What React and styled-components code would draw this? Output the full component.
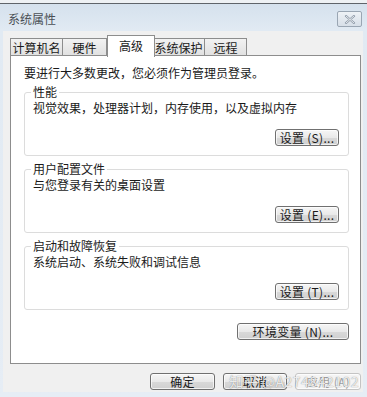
import React from "react";
import styled, { createGlobalStyle } from "styled-components";

const GlobalStyle = createGlobalStyle`
  html, body {
    margin: 0;
    padding: 0;
    background: #dfe8f1;
  }
  body {
    font-family: "Noto Sans CJK SC", "Noto Sans", sans-serif;
    font-size: 12px;
    color: #1a1a1a;
  }
`;

const tabs = [
  { label: "计算机名", width: 53 },
  { label: "硬件", width: 44 },
  { label: "高级", width: 48 },
  { label: "系统保护", width: 52 },
  { label: "远程", width: 42 },
];

const groups = [
  { title: "性能", desc: "视觉效果，处理器计划，内存使用，以及虚拟内存", key: "S" },
  { title: "用户配置文件", desc: "与您登录有关的桌面设置", key: "E" },
  { title: "启动和故障恢复", desc: "系统启动、系统失败和调试信息", key: "T" },
];

const App = () => {
  return (
    <>
      <GlobalStyle />
      <Window>
        <TitleBar>
          <Title>系统属性</Title>
          <CloseButton>
            <svg width="12" height="9" viewBox="0 0 12 9">
              <path d="M2 1 L10 8 M10 1 L2 8" stroke="#8a97a6" strokeWidth="2.2" strokeLinecap="round" />
              <path d="M2 1 L10 8 M10 1 L2 8" stroke="#fff" strokeWidth="0.8" strokeLinecap="round" />
            </svg>
          </CloseButton>
        </TitleBar>
        <Body>
          <TabRow>
            {tabs.map((t) => (
              <Tab key={t.label} width={t.width} active={t.label === "高级"}>
                {t.label}
              </Tab>
            ))}
          </TabRow>
          <Panel>
            <Notice>要进行大多数更改，您必须作为管理员登录。</Notice>
            {groups.map((g) => (
              <Group key={g.title}>
                <Legend>{g.title}</Legend>
                <Desc>{g.desc}</Desc>
                <GroupFoot>
                  <Button width={64}>设置 ({g.key})...</Button>
                </GroupFoot>
              </Group>
            ))}
            <PanelFoot>
              <Button width={112}>环境变量 (N)...</Button>
            </PanelFoot>
          </Panel>
          <DialogFoot>
            <Button width={65}>确定</Button>
            <Button width={64}>取消</Button>
            <Button width={66} disabled>
              应用 (A)
            </Button>
            <Watermark>知乎 @A274842102</Watermark>
          </DialogFoot>
        </Body>
      </Window>
    </>
  );
};

export default App;

const Window = styled.div`
  width: 367px;
  height: 397px;
  box-sizing: border-box;
  padding-top: 3px;
  background: linear-gradient(#eef1f4 3px, #d5e1ed 4px, #e1eaf3 30px, #e6edf5);
  display: flex;
  flex-direction: column;
  overflow: hidden;
`;

const TitleBar = styled.div`
  height: 27px;
  flex-shrink: 0;
  border-top: 1px solid #5f646a;
  display: flex;
  align-items: center;
  justify-content: space-between;
  padding: 0 5px 0 8px;
`;

const Title = styled.div`
  font-size: 12px;
  color: #4a4f55;
  padding-top: 2px;
`;

const CloseButton = styled.div`
  width: 23px;
  height: 14px;
  margin-top: 3px;
  border: 1px solid #9aa6b3;
  border-radius: 2px;
  background: linear-gradient(#eef2f6, #d7dfe8);
  display: flex;
  align-items: center;
  justify-content: center;
`;

const Body = styled.div`
  flex: 1;
  margin: 0 4px 5px 3px;
  background: #f0f0f0;
  padding: 3px 2px 0 7px;
  display: flex;
  flex-direction: column;
  position: relative;
`;

const TabRow = styled.div`
  display: flex;
  align-items: flex-end;
  height: 22px;
  position: relative;
  z-index: 1;
`;

const Tab = styled.div`
  width: ${(p) => p.width}px;
  box-sizing: border-box;
  text-align: center;
  height: ${(p) => (p.active ? "22px" : "18px")};
  line-height: ${(p) => (p.active ? "19px" : "17px")};
  margin: ${(p) => (p.active ? "0 -2px -1px 0" : "0")};
  border: 1px solid #8d8d8d;
  border-bottom: ${(p) => (p.active ? "none" : "1px solid #8d8d8d")};
  border-left-width: ${(p) => (p.active ? "1px" : "0")};
  background: ${(p) => (p.active ? "#fff" : "linear-gradient(#f2f2f2, #e1e1e1)")};
  font-size: 12px;
  color: #1a1a1a;
  position: relative;
  z-index: ${(p) => (p.active ? 2 : 0)};
  &:first-child {
    border-left-width: 1px;
  }
`;

const Panel = styled.div`
  height: 309px;
  flex-shrink: 0;
  box-sizing: border-box;
  margin-top: -1px;
  background: #fff;
  border: 1px solid #8d8d8d;
  padding: 10px 11px 0 13px;
  display: flex;
  flex-direction: column;
`;

const Notice = styled.div`
  font-size: 12px;
  line-height: 14px;
  margin-bottom: 6px;
`;

const Group = styled.fieldset`
  margin: 0 0 7px 0;
  padding: 0 9px 8px 8px;
  border: 1px solid #dcdcdc;
  border-radius: 3px;
  height: 70px;
  box-sizing: border-box;
`;

const Legend = styled.legend`
  padding: 0 2px;
  margin-left: -2px;
  font-size: 12px;
  line-height: 12px;
`;

const Desc = styled.div`
  font-size: 12px;
  line-height: 14px;
  margin-top: 3px;
`;

const GroupFoot = styled.div`
  margin-top: 14px;
  display: flex;
  justify-content: flex-end;
`;

const PanelFoot = styled.div`
  display: flex;
  justify-content: flex-end;
  margin-top: 6px;
`;

const Button = styled.div`
  width: ${(p) => p.width}px;
  height: 17px;
  box-sizing: border-box;
  border: 1px solid ${(p) => (p.disabled ? "#c4c4c4" : "#707070")};
  border-radius: 3px;
  background: ${(p) =>
    p.disabled ? "#f4f4f4" : "linear-gradient(#f6f6f6 0%, #e9e9e9 50%, #d9d9d9 51%, #cfcfcf 100%)"};
  box-shadow: inset 0 0 0 1px rgba(255, 255, 255, 0.7);
  color: ${(p) => (p.disabled ? "#a0a0a0" : "#1a1a1a")};
  font-size: 12px;
  line-height: 15px;
  text-align: center;
  letter-spacing: 0.3px;
`;

const DialogFoot = styled.div`
  display: flex;
  justify-content: flex-end;
  gap: 8px;
  margin-top: 9px;
  position: relative;
`;

const Watermark = styled.div`
  position: absolute;
  right: 2px;
  top: -2px;
  font-size: 14px;
  color: rgba(255, 255, 255, 0.85);
  text-shadow: 0 0 1px rgba(60, 60, 60, 0.7);
  letter-spacing: 0.5px;
  pointer-events: none;
`;
